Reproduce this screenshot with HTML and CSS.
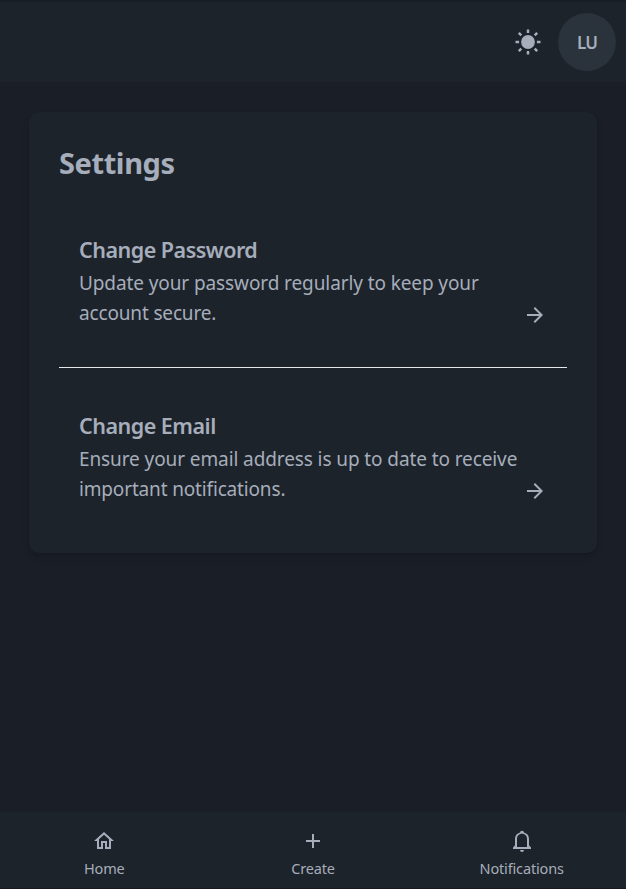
FILE: index.html
```html
<!DOCTYPE html>
<html lang="en">
<head>
<meta charset="utf-8">
<title>Settings</title>
<link rel="stylesheet" href="styles.css">
</head>
<body>
<header class="topbar">
  <svg class="sun" viewBox="-14 -14 28 28" aria-hidden="true">
    <circle r="6.9"/>
    <path d="M0-12.5v3.6M0 8.9v3.6M-12.5 0h3.6M8.9 0h3.6M-9.2-9.2l2.5 2.5M9.2-9.2l-2.5 2.5M-9.2 9.2l2.5-2.5M9.2 9.2l-2.5-2.5"/>
  </svg>
  <div class="avatar"><span>LU</span></div>
</header>
<main>
  <section class="card">
    <h1>Settings</h1>
    <a class="item">
      <div class="copy">
        <h2>Change Password</h2>
        <p>Update your password regularly to keep your<br><span class="last">account secure.</span></p>
      </div>
      <svg class="icon" viewBox="0 0 24 24"><path d="M12 4l-1.41 1.41L16.17 11H4v2h12.17l-5.58 5.59L12 20l8-8z"/></svg>
    </a>
    <a class="item">
      <div class="copy">
        <h2>Change Email</h2>
        <p>Ensure your email address is up to date to receive<br><span class="last">important notifications.</span></p>
      </div>
      <svg class="icon" viewBox="0 0 24 24"><path d="M12 4l-1.41 1.41L16.17 11H4v2h12.17l-5.58 5.59L12 20l8-8z"/></svg>
    </a>
  </section>
</main>
<nav class="dock">
  <a><svg class="icon" viewBox="0 0 24 24"><path d="M12 5.69l5 4.5V18h-2v-6H9v6H7v-7.81l5-4.5M12 3L2 12h3v8h6v-6h2v6h6v-8h3L12 3z"/></svg><span>Home</span></a>
  <a><svg class="icon" viewBox="0 0 24 24"><path d="M19 13h-6v6h-2v-6H5v-2h6V5h2v6h6v2z"/></svg><span>Create</span></a>
  <a><svg class="icon" viewBox="0 0 24 24"><path d="M10 3.400a2 1.600 0 0 1 4 0C17.200 4.200 19 6.700 19 10v6.300L21 18.500V20H3v-1.500L5 16.300V10C5 6.700 6.800 4.200 10 3.400zM12 4.800C9 4.800 7 7 7 10v8h10v-8c0-3-2-5.200-5-5.200zM10 21h4a2 2 0 0 1-4 0z"/></svg><span>Notifications</span></a>
</nav>
</body>
</html>
```
FILE: styles.css
```css
* { box-sizing: border-box; }

body {
  margin: 0;
  height: 889px;
  display: flex;
  flex-direction: column;
  overflow: hidden;
  border-top: 2px solid #191e24;
  border-bottom: 1px solid #15191e;
  background: #1a1e26;
  color: #a6adbb;
  font-family: "Noto Sans", "Open Sans", sans-serif;
}

h1, h2, p { margin: 0; }
svg { display: block; fill: currentColor; flex: none; }

.topbar {
  flex: none;
  height: 80px;
  padding: 0 10px;
  display: flex;
  align-items: center;
  justify-content: flex-end;
  gap: 16.500px;
  background: #1d232a;
}

.sun { width: 28px; height: 28px; }
.sun path { fill: none; stroke: currentColor; stroke-width: 2.500; }

.avatar {
  width: 58px;
  height: 58px;
  border-radius: 50%;
  display: flex;
  align-items: center;
  justify-content: center;
  background: #2a323c;
  font-size: 17px;
  font-weight: 600;
  letter-spacing: -0.800px;
}

main { flex: 1; padding: 30px 29px; }

.card {
  height: 441px;
  padding: 30px;
  border-radius: 10px;
  background: #1d232a;
  box-shadow: 0 5px 8px -1px rgb(0 0 0 / 10%), 0 2px 5px -2px rgb(0 0 0 / 10%);
}

h1 {
  height: 45px;
  font-size: 29px;
  line-height: 42px;
  font-weight: 700;
  letter-spacing: -0.400px;
}

.item {
  height: 175px;
  margin-top: 5px;
  padding: 43px 20px 0;
  display: flex;
  justify-content: space-between;
}
.item + .item { margin-top: 0; border-top: 1px solid #e5e7eb; }
.item .icon { margin-top: 68px; }

.copy { flex: none; width: 440px; white-space: nowrap; }

h2 { font-size: 21.500px; line-height: 30px; font-weight: 600; letter-spacing: -0.500px; }

p { font-size: 19px; line-height: 30px; margin-top: 3px; letter-spacing: -0.100px; }
.last { letter-spacing: -0.160px; }

.icon { width: 24px; height: 24px; }

.dock {
  flex: none;
  height: 76px;
  padding-top: 17px;
  display: grid;
  grid-template-columns: repeat(3, 1fr);
  background: #1d232a;
  font-size: 14.500px;
  line-height: 22px;
  letter-spacing: -0.150px;
}
.dock a { display: flex; flex-direction: column; align-items: center; gap: 4px; }
```
